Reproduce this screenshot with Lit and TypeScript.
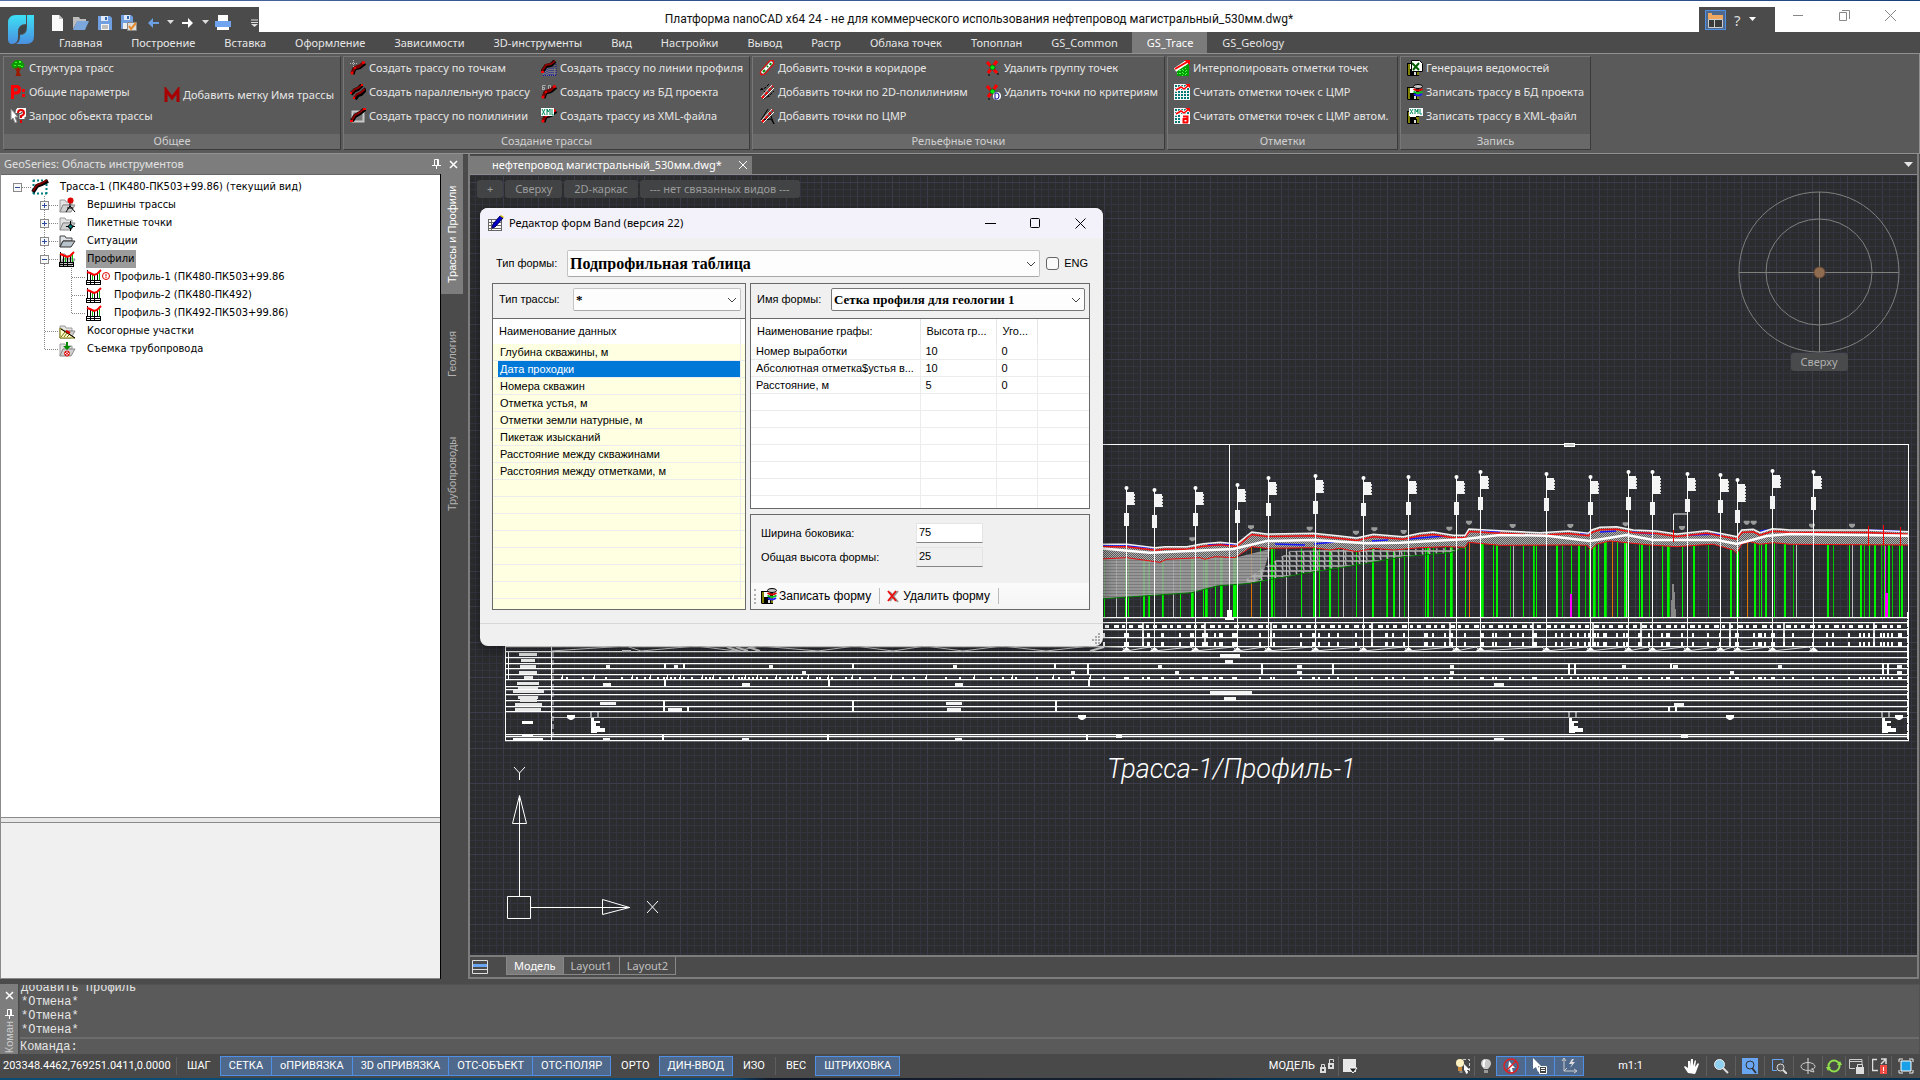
import { LitElement, html, svg, css, nothing } from "lit";
import { customElement, state, property } from "lit/decorators.js";
import { classMap } from "lit/directives/class-map.js";

/* ---------- icons ---------- */

const trace = svg`<path d="M2.500 14 L4.500 8.500 L10 7 L15 3" fill="none" stroke="#000" stroke-width="4" stroke-linejoin="round"/><path d="M2 13 L4.500 8 L9.500 6 L14 2" fill="none" stroke="#7d0000" stroke-width="3" stroke-linejoin="round"/><circle cx="2" cy="13" r="1.500" fill="#f00"/><circle cx="5" cy="8" r="1" fill="#f00"/><circle cx="13.500" cy="2.500" r="1.500" fill="#f00"/>`;
const floppy = svg`<path d="M0 3h12v13H1L0 15z" fill="#000"/><path d="M1 4h2v11H1z M9 9h3v6H9z" fill="#808000"/><path d="M3 4h6v5H3z" fill="#fff"/><path d="M4 11h6v4H4z" fill="#000"/><path d="M7 12h2v3H7z" fill="#ddd"/>`;
const xmlMark = svg`<path d="M2 0h14v8H2z" fill="#fff"/><path d="M3 1l3 5M6 1L3 6M8 6V1l2 3 1-3v5M13 1v5h2" fill="none" stroke="#008a5c" stroke-width="1"/>`;
const dbMark = svg`<ellipse cx="11" cy="2.500" rx="4.500" ry="2" fill="#c8c8c8" stroke="#000"/><path d="M6.500 5q4.500 3 9 0" stroke="#e00000" stroke-width="2" fill="none"/><path d="M6.500 7.500q4.500 3 9 0" stroke="#00c020" stroke-width="2" fill="none"/><path d="M7 10q4 3 8 0" stroke="#2020ff" stroke-width="2" fill="none"/>`;
const folder = svg`<path d="M1 3h5l1 2h6v3H4l-3 7z" fill="#e4e4e4" stroke="#9a9a9a"/><path d="M4 8h12l-4 7H1z" fill="#cfcfcf" stroke="#8c8c8c"/>`;
const redCross = svg`<path d="M2 2l10 11M12 1L3 13" stroke="#f00" stroke-width="3" fill="none"/><path d="M3 15h2m7-1h2" stroke="#000"/><circle cx="7.500" cy="7.500" r="2.500" fill="#00e800" stroke="#063"/>`;
const demGrid = svg`<path d="M0 0h16v16H0z" fill="#f6f6f6"/><path d="M1 2h14M1 5h14M1 8h14M1 11h14M1 14h14" stroke="#007878" stroke-width="2" stroke-dasharray="2 1"/><path d="M1 7L7 3l3 2 5-4" stroke="#fff" stroke-width="3" fill="none"/><path d="M2 6L7 3l3 2 5-4" stroke="#f00" stroke-width="1.500" fill="none"/><path d="M11 0h5v4z" fill="#f00"/>`;
const profileChart = svg`<path d="M1.500 1v10M4.500 4v7M8.500 5v7M11.500 4v7" stroke="#000"/><path d="M6.500 5v7M13.500 2v9" stroke="#00c000"/><path d="M1 3l3 1 4 2 3-1 4-4" stroke="#f00" stroke-width="2" fill="none"/><path d="M0 11.500h15M0 13.500h15M0 15.500h15M.5 11v5M4.500 11v5M8.500 11v5M14.500 11v5" stroke="#000"/>`;
const slantPoints = (fill: string) => svg`<path d="M2 13L13 1M4 15L15 4" stroke="#fff" stroke-width="1"/><path d="M3 14L14 2" stroke="${fill}" stroke-width="2" stroke-dasharray="3 2"/>`;

const ICONS: Record<string, unknown> = {
  tree: svg`<path d="M8 0c3 0 5 1 5 3 2 1 2 4 0 5-1 1-3 1-5 1S4 9 3 8C1 7 1 4 3 3c0-2 2-3 5-3z" fill="#0c9a00"/><path d="M5 2h2v1H5zM9 1h2v2H9zM4 5h2v1H4zM8 5h3v1H8zM11 6h2v1h-2z" fill="#3dff20"/><path d="M7 8h2v5l2 3H6l1-3zM5 8l2 3M11 8l-2 3" fill="#9c1a00" stroke="#9c1a00"/>`,
  params: svg`<path d="M2.500 15V2.500h4q3 0 3 3t-3 3.500h-4" fill="none" stroke="#f00" stroke-width="3"/><path d="M12 5h3v3h-3zM12 10h3v3h-3z" fill="#f00"/>`,
  query: svg`<path d="M1 1l7 8H5l2 5-2 1-2-5-2 2z" fill="#fff" stroke="#888"/><path d="M8 5q0-4 4-4t3 4q0 2-3 3v3" fill="none" stroke="#fff" stroke-width="5"/><path d="M8 5q0-3 3-3t3 3q0 2-3 3v2M11 12v3" fill="none" stroke="#e00000" stroke-width="2"/>`,
  mark: svg`<path d="M2 15V3l6 8 6-8v12" fill="none" stroke="#a80000" stroke-width="3"/>`,
  byPoints: svg`${trace}<path d="M3.500 0v7M0 3.500h7" stroke="#b8b8b8" stroke-dasharray="1 1"/>`,
  parallel: svg`<path d="M1 10L5 6l3-1 4-4M5 15l3-4 3-1 5-5" fill="none" stroke="#000" stroke-width="4"/><path d="M1 9L5 5l3-1 4-3M4 14l3-4 3-1 5-4" fill="none" stroke="#8a0000" stroke-width="2"/><path d="M0 8h2v2H0zM3 13h2v2H3zM11 0h2v2h-2z" fill="#f00"/>`,
  polyline: svg`<path d="M2.500 3.500h11v10h-11z" fill="#777" stroke="#c8c8c8" stroke-width="2"/><path d="M2 13L5 8l5-3 5-4" fill="none" stroke="#000" stroke-width="4"/><path d="M2 12L5 7l4-2 5-4" fill="none" stroke="#8a0000" stroke-width="2"/><path d="M0 12h3v2H0zM13 0h3v2h-3z" fill="#f00"/>`,
  profLine: svg`<path d="M2 8h13v8H2z" fill="#777"/><path d="M2 15.500h14M4 10v5M6 9v6M8 8v7M10 8v7M12 6v9M15 4v11" stroke="#1010a0" stroke-dasharray="1 1" stroke-width="1"/><path d="M1 12L5 6l5-1 4-4" fill="none" stroke="#000" stroke-width="4"/><path d="M1 11L5 5l5-1 4-3" fill="none" stroke="#8a0000" stroke-width="2"/><path d="M0 11h3v2H0z" fill="#f00"/>`,
  fromDb: svg`<path d="M1.500 6V1.500h3M1.500 3.500h2v2h-2M6 6.500h4M7.500 6V1.500h2V6" stroke="#aaa" fill="none"/>${trace}`,
  fromXml: svg`${trace}<path d="M0 0h13v8H0z" fill="#fff"/><path d="M1 1l3 6M4 1L1 7M6 7V1l1 3 2-3v6M11 1v6h2" stroke="#008a5c" fill="none"/>`,
  corridor: svg`<path d="M1 12L10 1l4-1 1 4-9 10-4 1z" fill="#6a4a4a" stroke="#f00"/><path d="M3 13L13 2" stroke="#fff" stroke-width="3"/><path d="M4 12l2-2M8 7l1-1M11 5l1-2" stroke="#008a00" stroke-width="2"/>`,
  poly2d: svg`<path d="M1 6l5-2 4-4M4 15l6-3 5-5M2 4l9 9" stroke="#000" fill="none" stroke-dasharray="3 1"/>${slantPoints("#f00")}`,
  dem: svg`<path d="M9 1L2 12l10-1 3 5L10 3" stroke="#000" fill="none"/>${slantPoints("#f00")}`,
  delGroup: redCross,
  delCrit: svg`${redCross}<circle cx="12" cy="12" r="4" fill="#fff"/><path d="M10 9v6h2q2 0 2-3t-2-3z" fill="none" stroke="#000090"/>`,
  interp: svg`<path d="M3 8l12-4v12H3z" fill="#00a000"/><path d="M5.500 7v9M8.500 6v10M11.500 5v11M3 10.500h12M3 13.500h12" stroke="#55ff55" stroke-dasharray="1 2"/><path d="M1 10L13 2" stroke="#fff" stroke-width="4"/><path d="M1 9L13 2" stroke="#f00" stroke-width="2"/><path d="M10 0h6v5z" fill="#f00"/>`,
  demRead: demGrid,
  demAuto: svg`${demGrid}<path d="M7 7h9v9H7z" fill="#fff"/><path d="M9 8.500h4.500v6M13 11H9.500v3.500H14" fill="none" stroke="#f00" stroke-width="2"/>`,
  report: svg`${floppy}<path d="M4.500 .5h8l3 3v8h-11z" fill="#fff" stroke="#000"/><path d="M5 3l7 7M12 3l-6 7" stroke="#006000" stroke-width="2"/>`,
  toDb: svg`${floppy}${dbMark}`,
  toXml: svg`${floppy}${xmlMark}`,
  fileNew: svg`<path d="M3 0h7l4 4v12H3z" fill="#fafafa"/><path d="M10 0v4h4z" fill="#c4c4c4"/>`,
  fileOpen: svg`<path d="M0 14V2h6l1 2h6v3H4z" fill="#bdbdbd"/><path d="M4 6h12l-4 9H0z" fill="#7ba7dc"/>`,
  save: svg`<path d="M1 1h12l2 2v12H1z" fill="#6f9fe0"/><path d="M4 1h7v5H4z" fill="#dfe9f7"/><path d="M8 2h2v3H8z" fill="#3567ad"/><path d="M4 9h8v6H4z" fill="#f4f4f4"/><path d="M5 11h6M5 13h6" stroke="#888"/>`,
  saveAs: svg`<path d="M0 0h10l2 2v12H0z" fill="#6f9fe0"/><path d="M3 0h6v5H3z" fill="#dfe9f7"/><path d="M6 1h2v3H6z" fill="#3567ad"/><path d="M2 8h8v6H2z" fill="#eee"/><path d="M6.500 7.500h9v8h-9z" fill="#ddd" stroke="#888"/><path d="M8 11l2 3 5-6" stroke="#e88b2c" stroke-width="2" fill="none"/>`,
  undo: svg`<path d="M8 3v4h6v2H8v4L3 8z" fill="#6c9fe4"/>`,
  redo: svg`<path d="M8 3v4H2v2h6v4l5-5z" fill="#fff"/>`,
  print: svg`<path d="M3 0h10v7H3z" fill="#fff"/><path d="M0 6h16v6H0z" fill="#6fa4ee"/><path d="M2 12h12v3H2z" fill="#fff"/>`,
  route: svg`<path d="M0 0h16v16H0z" fill="#fff"/><path d="M1 1.500h15M1 14.500h15M1.500 1v14M14.500 1v14" stroke="#008080" stroke-width="2" stroke-dasharray="2 2"/><path d="M1 13L5 7l5-2 6-3" stroke="#000" stroke-width="4" fill="none"/><path d="M1 12L5 6l5-2 5-3" stroke="#800000" stroke-width="2" fill="none"/>`,
  fVertex: svg`${folder}<path d="M11 3v7M11 9l-4 6M11 9l5 6M8 11h6" stroke="#000" fill="none"/><circle cx="11.500" cy="3.500" r="3" fill="#e00000"/>`,
  fPicket: svg`${folder}<path d="M11.500 6v10M7 11.500h9" stroke="#000"/><circle cx="11.500" cy="11.500" r="2" fill="#008080" stroke="#000"/>`,
  fOpen: svg`<path d="M1 3h5l1 2h6v3H4l-3 6z" fill="#dfe3e8" stroke="#444"/><path d="M4 8h12l-4 6H1z" fill="#b9c3cc" stroke="#333"/>`,
  fProfile: svg`${folder}${profileChart}`,
  profile: profileChart,
  profileWarn: svg`${profileChart}<circle cx="20" cy="7" r="3.500" fill="#fff" stroke="#e00000"/><path d="M20 5v2.500M20 8v1" stroke="#e00000"/>`,
  fSlope: svg`${folder}<path d="M1 5l15 10H1z" fill="#fffbd0" stroke="#7a7400"/><path d="M2 14l4-5M5 14l3-4M8 14l3-3" stroke="#7a7400"/><path d="M2 6l14 9" stroke="#000"/><path d="M7 8l4 2" stroke="#e00000" stroke-width="2"/>`,
  fPipe: svg`${folder}<path d="M7 1h2v4h3L8 9 4 5h3z" fill="#008a00"/><circle cx="8" cy="12.500" r="2.500" fill="#fff" stroke="#e00000"/><path d="M6 11l4 3M10 11l-4 3" stroke="#e00000"/>`,
  form: svg`<path d="M0 4h14v12H0z" fill="#fff"/><path d="M0 4.500h14M0 7.500h14M0 10.500h14M0 13.500h14M.5 4v12M3.500 4v12M13.500 4v12M0 15.500h14" stroke="#666"/><path d="M4 13l1-4 7-8 3 2-8 9z" fill="#0000c8" stroke="#000060"/><path d="M12 1l1-1 3 2-1 1z" fill="#e0c000"/>`,
  delForm: svg`<path d="M5 4l8 10M13 3L5 13" stroke="#999" stroke-width="2"/><path d="M3 3l8 10M11 3L3 13" stroke="#e81010" stroke-width="2"/>`,
  locks: svg`<path d="M1 9h6v6H1zM9 5h6v6H9z" fill="#ddd"/><path d="M2.500 9V6.500h3V9M10.500 5V1.500h4V4" stroke="#ddd" fill="none"/><path d="M3 11h2v2H3zM11 7h2v2h-2z" fill="#444"/>`,
  sheet: svg`<path d="M1 1h13v13H1z" fill="#e8e8e8"/><path d="M7 10h8l-4 5z" fill="#222" stroke="#fff"/>`,
  bulbSel: svg`<path d="M8 1.500h6.500v12H10M4.500 14h3" stroke="#ccc" stroke-dasharray="3 2" fill="none"/><circle cx="5" cy="5" r="4" fill="#fff2c0"/><path d="M3 9h4v4H3z" fill="#c98a3c"/><path d="M9 6l6 6h-3l1 3-2 1-1-4-1 1z" fill="#fff"/>`,
  bulb: svg`<path d="M8 1q5 0 5 5 0 2-3 5H6Q3 8 3 6q0-5 5-5z" fill="#c9c9c9"/><path d="M7 2q-2 2-1 7" stroke="#fff" stroke-width="2" fill="none"/><path d="M6 12h4v3H6z" fill="#999"/>`,
  noSel: svg`<path d="M6 3l6 7H9l1 4-2 1-1-4-2 1z" fill="#fff"/><circle cx="8" cy="8" r="7" fill="none" stroke="#e02020" stroke-width="1.500"/><path d="M3 13L13 3" stroke="#e02020" stroke-width="1.500"/>`,
  selMenu: svg`<path d="M1 0l8 8H6l2 5-2 1-2-5-3 2z" fill="#fff"/><path d="M7.500 8.500h7v7h-7z" fill="#444" stroke="#fff"/><path d="M9 10.500h4M9 12.500h4" stroke="#fff"/>`,
  dynUcs: svg`<path d="M3 1v12h12M1 3l2-3 2 3M13 11l3 2-3 2M3 13l3-3" stroke="#ccc" fill="none"/><path d="M11 1L8 6h3l-2 4 5-6h-3l2-3z" fill="#ddd"/>`,
  hand: svg`<path d="M4 15L0 9l1-1 3 2V3h2v5l1-7h2v7l2-6 1 1-1 6 3-4 1 1-3 8-1 2z" fill="#fff"/>`,
  zoom: svg`<path d="M10 10l5 5" stroke="#ddd" stroke-width="2"/><circle cx="6.500" cy="6.500" r="5" fill="#8fd0ee" stroke="#eee"/>`,
  zoomAll: svg`<path d="M0 0h16v16H0z" fill="#6aa5f2"/><path d="M10 10l4 5" stroke="#333" stroke-width="2"/><circle cx="8" cy="7" r="4" fill="none" stroke="#333"/>`,
  zoomWin: svg`<path d="M12 5V1.500H1.500v11H6" stroke="#6aa5f2" fill="none"/><path d="M12 12l4 4" stroke="#ddd" stroke-width="2"/><circle cx="9.500" cy="9.500" r="3.500" fill="#555" stroke="#ddd"/>`,
  orbit: svg`<path d="M8 0v16" stroke="#ddd"/><ellipse cx="8" cy="8.500" rx="7" ry="4" fill="none" stroke="#ccc"/><path d="M10 13l4 1-2-4" stroke="#ccc" fill="none"/>`,
  refresh: svg`<circle cx="8" cy="8" r="5.500" fill="none" stroke="#8fe04a" stroke-width="2"/><path d="M5 9H0l2 4zM11 7h5l-2-4z" fill="#8fe04a"/>`,
  winLock: svg`<path d="M13 6V1.500H.5v9H6M1 3.500h12" stroke="#ccc" fill="none"/><path d="M7 9h8v7H7z" fill="#ddd"/><path d="M8.500 9V6.500h5V9" stroke="#ddd" fill="none"/>`,
  winAlert: svg`<path d="M5 1.500H.5v11H6M9 1h5v5M9 6l5-5" stroke="#ddd" fill="none" stroke-width="1.500"/><path d="M8 7h7v9H8z" fill="#f04a44"/><path d="M11.500 9v4M11.500 14v1" stroke="#fff"/>`,
  full: svg`<path d="M1 4V1h4M11 1h4v3M15 12v3h-4M5 15H1v-3" stroke="#eee" fill="none"/><path d="M3 3h10v10H3z" fill="#1aa0e8" stroke="#fff"/>`,
};

const icon = (name: string, w = 16) =>
  html`<svg class="ico" width=${w} height="16" viewBox="0 0 ${w} 16" aria-hidden="true">${ICONS[name]}</svg>`;

/* ---------- drawing ---------- */

type Pt = [number, number];

@customElement("cad-drawing")
class CadDrawing extends LitElement {
  static styles = css`
    :host { display: block; width: 100%; height: 100%; }
    svg { display: block; width: 100%; height: 100%; }
    .minor { stroke: #333440; }
    .major { stroke: #3c3c4c; }
    .caption { font: italic 300 27px Roboto, "Noto Sans", sans-serif; fill: #fff; }
  `;

  /* left part is stored as thirds of a unit from (1100,430), right part from (1500,430) */
  private pts(a: Pt[], b: Pt[]): Pt[] {
    return [
      ...a.map(([x, y]): Pt => [1100 + x / 3, 430 + y / 3]),
      ...b.map(([x, y]): Pt => [1500 + x / 3, 430 + y / 3]),
    ];
  }

  private xs(a: number[], b: number[]) {
    return [...a.map((x) => 1100 + x / 3), ...b.map((x) => 1500 + x / 3)].map((x) => Math.round(x));
  }

  private at(line: Pt[], x: number) {
    for (let i = 1; i < line.length; i++) {
      const [x0, y0] = line[i - 1];
      const [x1, y1] = line[i];
      if (x <= x1) return y0 + ((y1 - y0) * (x - x0)) / (x1 - x0 || 1);
    }
    return line[line.length - 1][1];
  }

  render() {
    const ground = this.pts(
      [[0, 343], [80, 343], [165, 353], [195, 350], [260, 350], [310, 341], [360, 337], [410, 342], [455, 306], [500, 312], [640, 310], [720, 318], [770, 324], [820, 313], [910, 320], [960, 310], [1000, 306], [1060, 316], [1095, 316], [1107, 297]],
      [[0, 302], [120, 308], [205, 303], [265, 310], [275, 300], [300, 292], [350, 290], [400, 300], [470, 303], [530, 312], [620, 302], [690, 316], [711, 320], [725, 300], [760, 298], [780, 308], [817, 296], [870, 300], [1100, 300], [1227, 305]]);
    const lower = this.pts(
      [[0, 387], [80, 383], [180, 397], [200, 388], [300, 383], [315, 388], [345, 380], [405, 383], [455, 350], [500, 355], [640, 353], [690, 360], [720, 355], [770, 365], [820, 355], [880, 360], [960, 353], [1040, 350], [1095, 352], [1105, 337]],
      [[0, 346], [200, 345], [262, 346], [272, 360], [290, 342], [330, 333], [450, 345], [530, 350], [600, 345], [640, 343], [700, 360], [711, 370], [725, 342], [750, 335], [780, 343], [820, 338], [870, 343], [1227, 345]]);
    const mid = this.pts(
      [[0, 355], [150, 368], [400, 357], [500, 333], [640, 330], [800, 340], [900, 338], [1090, 328]],
      [[0, 315], [140, 317], [270, 333], [380, 315], [460, 330], [650, 330], [711, 342], [800, 318], [870, 312], [1227, 317]]);
    const bottom = this.pts([[0, 507], [275, 488], [350, 468], [450, 460], [625, 428], [770, 405], [910, 380], [1050, 368], [1095, 352]], []);
    const green = this.xs(
      [12, 74, 79, 85, 129, 143, 148, 185, 190, 240, 273, 280, 309, 316, 322, 344, 360, 365, 398, 402, 407, 480, 513, 522, 604, 638, 643, 657, 687, 715, 767, 816, 857, 861, 879, 912, 975, 980, 1000, 1035, 1050, 1056, 1095, 1144, 1148, 1180, 1187],
      [30, 69, 99, 103, 107, 168, 187, 213, 235, 254, 268, 280, 285, 293, 312, 317, 352, 372, 380, 416, 424, 447, 487, 500, 506, 547, 579, 623, 661, 690, 708, 714, 763, 777, 783, 795, 817, 822, 853, 878, 939, 980, 1000, 1048, 1080, 1092, 1108, 1121, 1143, 1152, 1165, 1176, 1196, 1202]);
    const gray = this.xs([49, 219, 558, 729, 898], [38, 377, 887, 1056]);
    const orange = this.xs([452, 1107], [335, 741]);
    const poles: [number, number, number][] = [
      [1126, 488, 13], [1154, 490, 13], [1195, 488, 13], [1237, 485, 13], [1268, 478, 13], [1315, 476, 13], [1363, 478, 13], [1408, 477, 13], [1456, 477, 13], [1480, 472, 13],
      [1546, 474, 12], [1590, 477, 13], [1628, 472, 13], [1652, 472, 18], [1687, 474, 13], [1720, 475, 13], [1737, 480, 18], [1772, 471, 13], [1813, 472, 13]];
    const hats = this.pts(
      [[277, 328], [453, 292], [629, 296], [768, 308], [823, 298], [911, 306], [1048, 296], [1107, 278]],
      [[38, 288], [211, 288], [377, 283], [546, 294], [740, 278], [761, 278], [936, 287], [1056, 287]]);
    const str = (l: Pt[], dy = 0) => l.map(([x, y]) => `${x.toFixed(1)},${(y + dy).toFixed(1)}`).join(" ");
    const rev = (l: Pt[]) => [...l].reverse();

    const grid: unknown[] = [];
    for (let i = 0; i < 420; i++) {
      const x = Math.round(467.600 + (i * 35.370) / 5) + 0.5;
      grid.push(svg`<line class=${i % 5 === 0 ? "major" : "minor"} x1=${x} x2=${x} y1="0" y2="1600"/>`);
    }
    for (let i = 0; i < 200; i++) {
      const y = Math.round(175.300 + (i * 35.330) / 5) + 0.5;
      grid.push(svg`<line class=${i % 5 === 1 ? "major" : "minor"} y1=${y} y2=${y} x1="400" x2="3400"/>`);
    }

    const rowYs = [617, 622, 629, 637, 646, 651, 657, 663, 668, 674, 679, 686, 689, 694, 700, 706, 711, 734, 736, 740];
    const ticksHidden = [562, 567, 583, 594, 606, 622, 632, 637, 645, 650, 658, 664, 667, 671, 675, 680, 684, 692, 702, 706, 710, 713, 720, 729, 733, 739, 742, 745, 749, 753, 757, 761, 767, 776, 780, 788, 792, 797, 802, 808, 817, 820, 828, 832, 846, 852, 860, 875, 891, 903, 914, 926, 946, 960, 974, 991, 1003, 1012, 1016, 1037, 1053, 1059, 1073, 1090];
    const zigL: Pt[] = [551, 626, 641, 696, 736, 760, 818, 855, 893, 925, 963, 1002, 1046, 1090].map((x, i): Pt => [x, i % 2 ? 646 : 651]);
    const zig = [...zigL, ...poles.flatMap(([x]): Pt[] => [[x - 4, 647], [x, 651]])];
    const bars = [[664, 663, 6], [683, 663, 6], [852, 663, 6], [1054, 663, 6], [1087, 663, 12], [1261, 663, 12], [1332, 663, 12], [1568, 663, 12], [1574, 663, 12], [1670, 663, 6], [1882, 663, 12], [1887, 663, 12],
      [663, 700, 11], [687, 706, 5], [852, 700, 11], [1055, 700, 11], [1668, 706, 6], [1675, 706, 6], [664, 680, 6], [828, 680, 6], [1088, 680, 6], [662, 735, 6], [827, 735, 6], [1086, 735, 6]];
    const cells = [[606, 665, 4], [674, 665, 4], [769, 665, 4], [953, 665, 4], [802, 671, 4], [1071, 671, 4], [1158, 665, 4], [1175, 671, 4], [1297, 665, 5], [1297, 671, 5], [1450, 665, 4], [1450, 671, 4], [1622, 665, 4], [1673, 665, 5], [1730, 671, 4], [1778, 665, 4], [1897, 665, 5], [1897, 671, 5],
      [603, 683, 8], [742, 683, 8], [955, 683, 8], [600, 702, 16], [668, 708, 14], [946, 702, 16], [947, 708, 14], [1220, 654, 20], [1225, 660, 8], [1210, 691, 42], [1224, 697, 12], [1494, 683, 10], [1674, 703, 10],
      [603, 738, 7], [742, 738, 7], [955, 738, 7], [1116, 735, 6], [1494, 738, 10], [1681, 735, 7]];
    const titles: [number, number][] = [[653, 18], [659, 14], [665, 16], [671, 18], [676, 9], [682, 22], [686, 20], [690, 31], [696, 20], [699, 17], [703, 27], [708, 26]];

    return html`<svg role="img" aria-label="Профиль трассы">
      <defs>
        <pattern id="chk" width="2" height="2" patternUnits="userSpaceOnUse"><rect width="2" height="2" fill="#5c5c5c"/><rect width="1" height="1" fill="#b0b0b0"/><rect x="1" y="1" width="1" height="1" fill="#b0b0b0"/></pattern>
        <pattern id="lin" width="40" height="3" patternUnits="userSpaceOnUse"><rect width="40" height="3" fill="#888"/><rect width="40" height="2" fill="#a8a8a8"/></pattern>
        <pattern id="brk" width="7" height="5" patternUnits="userSpaceOnUse"><path d="M0 1h7M1 1l1 4" stroke="#b4b4b4" stroke-width="1.500" fill="none"/></pattern>
      </defs>
      <rect width="100%" height="100%" fill="#2b2c2e"/>
      <g transform="translate(-470 -175)">
        <g shape-rendering="crispEdges">${grid}</g>

        <g class="boreholes" shape-rendering="crispEdges">
          ${green.map((x, i) => svg`<rect x=${x} y=${this.at(mid, x)} width=${i % 3 === 1 ? 2 : 1} height=${617 - this.at(mid, x)} fill=${i % 3 === 2 ? "#00c400" : "#00f400"}/>`)}
          ${gray.map((x) => svg`<rect x=${x} y=${this.at(ground, x)} width="1" height=${617 - this.at(ground, x)} fill="#c0c0c0"/>`)}
          ${orange.map((x) => svg`<rect x=${x} y=${this.at(mid, x)} width="1" height=${617 - this.at(mid, x)} fill="#e07400"/>`)}
          <rect x="1570" y="594" width="2" height="23" fill="#f0f"/><rect x="1885" y="593" width="3" height="24" fill="#f0f"/><rect x="1885" y="546" width="1" height="48" fill="#f0f"/>
          <path d="M1671 617l1-33h2l2 33z" fill="#888"/>
        </g>
        <g opacity="0.850">
          <polygon points="${str(lower.filter((p) => p[0] < 1250))} 1270,549 1262,578 ${str(rev(bottom.filter((p) => p[0] < 1255)))}" fill="url(#lin)"/>
        </g>
        <polygon points="1245,580 1290,551 1360,549 1466,548 ${str(rev(bottom.filter((p) => p[0] > 1240)))}" fill="url(#brk)"/>
        <polygon points="${str(ground)} ${str(rev(lower))}" fill="url(#chk)"/>
        <polyline points=${str(bottom)} fill="none" stroke="#007800"/>
        <polyline points=${str(lower)} fill="none" stroke="#f01010"/>
        <path d="M1103 546h27l24 2M1208 545l30-1M1275 544l30 1M1314 544l20-2M1372 541l16-1M1408 539l36-3M1480 530l20 2M1580 534l10-1M1600 532l16-1M1632 532l22 2M1690 535l32-1M1760 531l8-1M1868 530l31 1" stroke="#1818ff" stroke-width="1.500" fill="none"/>
        <polyline points=${str(ground, 2.500)} fill="none" stroke="#f01010" stroke-width="1.500"/>
        <polyline points=${str(ground)} fill="none" stroke="#f2f2f2" stroke-width="1.500"/>
        <polyline points=${str(mid)} fill="none" stroke="#fff" stroke-width="2.500"/>
        <path d="M1868.500 526v20M1883.500 525v20M1900.500 527v19M1673.500 530v12" stroke="#f00"/>
        <path d="M1673.500 530v-16h14" stroke="#eee" fill="none"/>
        ${hats.map(([x, y]) => svg`<path d="M${x - 3} ${y - 2}h6v2l-2 2h-2l-2-2z" fill="#9a9a9a"/>`)}

        <g class="poles">
          ${poles.map(([x, y, h]) => svg`<rect x=${x} y=${y} width="1" height=${648 - y} fill="#fff"/><circle cx=${x + 0.5} cy=${y} r="2" fill="#fff"/><rect x=${x + 1} y=${y + 4} width="7" height=${h} fill="#f4f4f4"/><path d="M${x + 8.5} ${y + 6}v${h - 2}" stroke="#ddd" stroke-dasharray="2 1"/><rect x=${x - 2} y=${y + h + 12} width="5" height="13" fill="#f4f4f4"/><path d="M${x - 4} 651h9l-3-3h-3z" fill="#fff"/>`)}
        </g>

        <g class="frame" shape-rendering="crispEdges" stroke="#fff" fill="none">
          <path d="M505.500 444.500H1908.500V740M505.500 444.500V740M551.500 617V740M508.500 652V680M1229.500 444V617"/>
          <rect x="1564" y="443" width="10" height="3" fill="#ccc"/>
        </g>
        <g class="rows">
          ${rowYs.map((y) => svg`<rect x="505" y=${y} width="1404" height="1" fill="#fff"/><rect x="505" y=${y + 1} width="1404" height="1" fill="#fff" opacity="0.250"/>`)}
          <rect x="551" y="717" width="1357" height="1" fill="#bbb"/>
        </g>
        <path d="M1227 610h5v7h-5zM1225 618h9v2h-9z" fill="#fff"/>
        <path d="M1908 612v128" stroke="#fff" stroke-width="2" stroke-dasharray="7 1"/>
        <path d="M553 652v88" stroke="#fff" stroke-dasharray="5 3" opacity="0.800"/>
        <path d="M1105 626.500h800" stroke="#fff" stroke-width="3" stroke-dasharray="4 5 5 3 3 4"/>
        <g fill="#fff" shape-rendering="crispEdges">
          ${green.map((x, i) => svg`<rect x=${x - 1} y="633" width="2" height="4"/><rect x=${x - 1} y="642" width="2" height="4"/><rect x=${x - 1} y="677" width="2" height="3"/>${i % 9 === 4 ? svg`<rect x=${x - 1} y="622" width="2" height="24" opacity="0.800"/>` : nothing}`)}
          ${ticksHidden.map((x) => svg`<rect x=${x - 1} y="677" width="2" height="3"/>`)}
          ${ticksHidden.filter((_, i) => i % 3 === 0).map((x) => svg`<rect x=${x} y="675" width="1" height="3"/>`)}
          ${bars.map(([x, y, h]) => svg`<rect x=${x} y=${y} width="2" height=${h}/>`)}
          ${titles.map(([y, w]) => svg`<rect x=${528 - w / 2} y=${y} width=${w} height="3" fill="#e8e8e8"/>`)}
          <rect x="522" y="721" width="11" height="3"/><rect x="522" y="735" width="11" height="2"/><rect x="513" y="738" width="30" height="2"/>
        </g>
        ${cells.map(([x, y, w]) => svg`<rect x=${x} y=${y} width=${w} height="3" fill="#f4f4f4"/>`)}
        <polyline points=${str(zig)} fill="none" stroke="#d8d8d8"/>
        <path d="M727 647l12 4M736 647l12 4M748 647l12 4M622 651h9M1090 651l14-4" stroke="#ddd" stroke-width="2" fill="none"/>
        ${[571, 1082, 1730, 1899].map((x) => svg`<path d="M${x - 4} 715h8v3l-3 2h-2l-3-2z" fill="#fff"/>`)}
        ${[593, 1571, 1884].map((x) => svg`<path d="M${x - 2} 712v5M${x + 5} 712v5" stroke="#fff"/><path d="M${x - 2} 718h3v3h6v2h-4v3h4v2h5v4h-8v1h-6z" fill="#fff"/>`)}

        <text class="caption" x="1107" y="778">Трасса-1/Профиль-1</text>

        <g class="ucs" fill="none" stroke="#fff">
          <path d="M507.500 896.500h23v22h-23zM519.500 896V796M512.500 823.500h14l-7-28zM531 907.500h99M602.500 899.500v15l27-7z"/>
          <path d="M514 767l5.500 6 5.500-6M519.500 773v7M647 901l11 12M658 901l-11 12"/>
        </g>
      </g>
    </svg>`;
  }
}

/* ---------- form editor window ---------- */

const DATA_ROWS = ["Глубина скважины, м", "Дата проходки", "Номера скважин", "Отметка устья, м", "Отметки земли натурные, м", "Пикетаж изысканий", "Расстояние между скважинами", "Расстояния между отметками, м"];
const FORM_ROWS = [["Номер выработки", "10", "0"], ["Абсолютная отметка$устья в...", "10", "0"], ["Расстояние, м", "5", "0"]];
const blank = (n: number) => Array.from({ length: n });

@customElement("form-editor")
class FormEditor extends LitElement {
  @state() private selected = 1;

  static styles = css`
    :host { display: flex; flex-direction: column; background: #f0f0f0; border-radius: 8px; overflow: hidden; font: 11px/13px "Liberation Sans", Arial, sans-serif; color: #000; box-shadow: 0 4px 14px rgba(0, 0, 0, .4); }
    button { font: inherit; color: inherit; background: none; border: 0; padding: 0; display: inline-flex; align-items: center; justify-content: center; }
    .title { display: flex; align-items: center; height: 30px; background: #f3f1f9; padding-left: 8px; font: 11px/16px "Noto Sans", sans-serif; }
    .title span { flex: 1; padding-left: 5px; }
    .title button { width: 45px; height: 28px; }
    .body { display: grid; grid-template-columns: 254px 1fr; column-gap: 4px; padding: 12px 13px 13px 12px; }
    .type { grid-column: 1 / 3; display: flex; align-items: center; height: 27px; margin-bottom: 6px; }
    .type > label:first-child { width: 71px; padding-left: 4px; }
    .pick { position: relative; flex: 1; display: flex; }
    .pick svg { position: absolute; right: 4px; top: 50%; margin-top: -3px; pointer-events: none; }
    select { appearance: none; width: 100%; border: 1px solid #c4c4c4; border-bottom-color: #a8a8a8; border-radius: 2px; background: #fdfdfd; color: #000; height: 23px; padding: 0 2px; font: bold 13px/16px "Liberation Serif", serif; }
    .big select { height: 27px; font-size: 16px; }
    .strong select { border-color: #777; }
    .eng { display: flex; align-items: center; gap: 5px; padding: 0 2px 0 6px; }
    .eng input { margin: 0; width: 13px; height: 13px; appearance: none; background: #fafafa; border: 1px solid #666; border-radius: 3px; }
    .box { border: 1px solid #696969; display: flex; }
    .head { align-items: center; padding: 0 4px 3px 6px; margin-bottom: -1px; box-sizing: border-box; height: 36px; }
    .head label { width: 74px; }
    .left { display: flex; flex-direction: column; }
    .right { display: flex; flex-direction: column; }
    table { border-collapse: collapse; width: 100%; table-layout: fixed; }
    th { font-weight: normal; text-align: left; height: 24px; padding: 0 0 0 6px; background: #fff; border-right: 1px solid #e5e5e5; white-space: nowrap; }
    th:last-child, td:last-child { border-right: 0; }
    td { height: 16px; padding: 0 0 0 5px; border-bottom: 1px solid #ececec; border-right: 1px solid #ececec; white-space: nowrap; overflow: hidden; }
    .list { flex: 1; background: #ffffe1; padding-bottom: 10px; overflow: hidden; align-items: flex-start; }
    .list th { height: 25px; }
    .list td span { display: block; padding-left: 2px; line-height: 16px; }
    .list td.sel span { background: #0078d7; color: #fff; }
    .list .c1 { width: 247px; }
    .grid { height: 189px; background: #fff; overflow: hidden; margin-bottom: 5px; align-items: flex-start; }
    .g1 { width: 169px; } .g2 { width: 76px; } .g3 { width: 41px; }
    .sizes { flex: 1; flex-direction: column; }
    .field { display: flex; align-items: center; padding: 0 0 4px 10px; }
    .field:first-child { padding-top: 8px; }
    .field label { width: 155px; }
    .field input { box-sizing: border-box; width: 67px; height: 20px; border: 1px solid #e4e4e4; border-bottom-color: #868686; background: #fff; font: inherit; padding: 0 2px 3px; color: #000; }
    .field input[readonly] { background: #f0f0f0; }
    .tools { display: flex; align-items: center; margin-top: auto; height: 26px; background: linear-gradient(#fbfbfb, #f4f4f4); padding-left: 3px; font: 12px/16px "Liberation Sans", sans-serif; }
    .tools button { gap: 2px; padding: 0 8px 0 5px; border-right: 1px solid #bbb; height: 16px; }
    .grip { border-left: 2px dotted #b0b0b0; height: 15px; }
    .status { border-top: 1px solid #d7d7d7; height: 20px; display: flex; justify-content: flex-end; align-items: flex-end; padding: 0 1px 2px; }
  `;

  private pick(id: string, value: string, cls = "") {
    return html`<span class="pick ${cls}"><select id=${id}><option>${value}</option></select>
      <svg width="10" height="6" viewBox="0 0 10 6" aria-hidden="true"><path d="M1 1l4 4 4-4" fill="none" stroke="#444"/></svg></span>`;
  }

  render() {
    return html`
      <div class="title">${icon("form")}<span>Редактор форм Band (версия 22)</span>
        <button aria-label="Свернуть"><svg width="11" height="11"><path d="M0 5.500h11" stroke="#000"/></svg></button>
        <button aria-label="Развернуть"><svg width="11" height="11"><rect x=".5" y=".5" width="9" height="9" rx="1" fill="none" stroke="#000"/></svg></button>
        <button aria-label="Закрыть"><svg width="11" height="11"><path d="M.5.5l10 10M10.500.5l-10 10" stroke="#000"/></svg></button>
      </div>
      <div class="body">
        <div class="type"><label for="ftype">Тип формы:</label>${this.pick("ftype", "Подпрофильная таблица", "big")}
          <div class="eng"><input type="checkbox" id="eng" /><label for="eng">ENG</label></div></div>
        <div class="left">
          <div class="box head"><label for="rtype">Тип трассы:</label>${this.pick("rtype", "*")}</div>
          <div class="box list"><table>
            <colgroup><col class="c1" /><col /></colgroup>
            <thead><tr><th scope="col">Наименование данных</th><th></th></tr></thead>
            <tbody>${DATA_ROWS.map((r, i) => html`<tr @click=${() => (this.selected = i)}><td class=${classMap({ sel: i === this.selected })}><span>${r}</span></td><td></td></tr>`)}
            ${blank(7).map(() => html`<tr><td></td><td></td></tr>`)}</tbody>
          </table></div>
        </div>
        <div class="right">
          <div class="box head"><label for="fname">Имя формы:</label>${this.pick("fname", "Сетка профиля для геологии 1", "strong")}</div>
          <div class="box grid"><table>
            <colgroup><col class="g1" /><col class="g2" /><col class="g3" /><col /></colgroup>
            <thead><tr><th scope="col">Наименование графы:</th><th scope="col">Высота гр...</th><th scope="col">Уго...</th><th></th></tr></thead>
            <tbody>${FORM_ROWS.map((r) => html`<tr>${r.map((c) => html`<td>${c}</td>`)}<td></td></tr>`)}
            ${blank(7).map(() => html`<tr><td></td><td></td><td></td><td></td></tr>`)}</tbody>
          </table></div>
          <div class="box sizes">
            <div class="field"><label for="side">Ширина боковика:</label><input id="side" value="75" /></div>
            <div class="field"><label for="total">Общая высота формы:</label><input id="total" value="25" readonly /></div>
            <div class="tools"><span class="grip"></span><button>${icon("toDb")}Записать форму</button><button>${icon("delForm")}Удалить форму</button></div>
          </div>
        </div>
      </div>
      <div class="status"><svg width="12" height="12"><path d="M8 2h2M5 5h2M8 5h2M2 8h2M5 8h2M8 8h2M8 11h2M5 11h2" stroke="#aaa" stroke-width="2"/></svg></div>
    `;
  }
}

/* ---------- application shell ---------- */

const MENU = ["Главная", "Построение", "Вставка", "Оформление", "Зависимости", "3D-инструменты", "Вид", "Настройки", "Вывод", "Растр", "Облака точек", "Топоплан", "GS_Common", "GS_Trace", "GS_Geology"];

type Cmd = [string, string];
const GROUPS: { name: string; cls: string; cols: Cmd[][] }[] = [
  { name: "Общее", cls: "w1", cols: [[["tree", "Структура трасс"], ["params", "Общие параметры"], ["query", "Запрос объекта трассы"]], [["mark", "Добавить метку Имя трассы"]]] },
  { name: "Создание трассы", cls: "w2", cols: [[["byPoints", "Создать трассу по точкам"], ["parallel", "Создать параллельную трассу"], ["polyline", "Создать трассу по полилинии"]], [["profLine", "Создать трассу по линии профиля"], ["fromDb", "Создать трассу из БД проекта"], ["fromXml", "Создать трассу из XML-файла"]]] },
  { name: "Рельефные точки", cls: "w3", cols: [[["corridor", "Добавить точки в коридоре"], ["poly2d", "Добавить точки по 2D-полилиниям"], ["dem", "Добавить точки по ЦМР"]], [["delGroup", "Удалить группу точек"], ["delCrit", "Удалить точки по критериям"]]] },
  { name: "Отметки", cls: "w4", cols: [[["interp", "Интерполировать отметки точек"], ["demRead", "Считать отметки точек с ЦМР"], ["demAuto", "Считать отметки точек с ЦМР автом."]]] },
  { name: "Запись", cls: "w5", cols: [[["report", "Генерация ведомостей"], ["toDb", "Записать трассу в БД проекта"], ["toXml", "Записать трассу в XML-файл"]]] },
];

/* guides: "." none, "|" line, "+" / "m" expander on a line, "-" root expander, "t" branch, "l" last branch */
const TREE: { g: string; icon: string; text: string; open?: boolean }[] = [
  { g: "-", icon: "route", text: "Трасса-1 (ПК480-ПК503+99.86) (текущий вид)" },
  { g: ".+", icon: "fVertex", text: "Вершины трассы" },
  { g: ".+", icon: "fPicket", text: "Пикетные точки" },
  { g: ".+", icon: "fOpen", text: "Ситуации" },
  { g: ".m", icon: "fProfile", text: "Профили", open: true },
  { g: ".|t", icon: "profileWarn", text: "Профиль-1 (ПК480-ПК503+99.86" },
  { g: ".|t", icon: "profile", text: "Профиль-2 (ПК480-ПК492)" },
  { g: ".|l", icon: "profile", text: "Профиль-3 (ПК492-ПК503+99.86)" },
  { g: ".t", icon: "fSlope", text: "Косогорные участки" },
  { g: ".l", icon: "fPipe", text: "Съемка трубопровода" },
];

const guide = (c: string) => html`<svg class="guide" width="27" height="18" aria-hidden="true">
  ${"|+tm".includes(c) ? svg`<path d="M13.500 0v18" stroke="#888" stroke-dasharray="1 1"/>` : c === "l" ? svg`<path d="M13.500 0v10" stroke="#888" stroke-dasharray="1 1"/>` : nothing}
  ${"-+tml".includes(c) ? svg`<path d="M14 9.500h13" stroke="#888" stroke-dasharray="1 1"/>` : nothing}
  ${"-+m".includes(c) ? svg`<rect x="9.500" y="5.500" width="8" height="8" fill="#f8f8f8" stroke="#8a8a8a"/><path d="M11 9.500h5" stroke="#2b4a9b"/>` : nothing}
  ${c === "+" ? svg`<path d="M13.500 7v5" stroke="#2b4a9b"/>` : nothing}</svg>`;

const pin = html`<svg width="9" height="10" viewBox="0 0 9 10" aria-hidden="true"><path d="M2.500 6V.5h4V6M5.500 0v6M0 6.500h9M4.500 7v3" stroke="#fff" fill="none"/></svg>`;
const cross = html`<svg width="9" height="9" viewBox="0 0 9 9" aria-hidden="true"><path d="M1 1l7 7M8 1L1 8" stroke="#fff" stroke-width="1.500"/></svg>`;

@customElement("app-root")
class AppRoot extends LitElement {
  @property() menu = "GS_Trace";
  @state() private modes = new Set(["СЕТКА", "оПРИВЯЗКА", "3D оПРИВЯЗКА", "ОТС-ОБЪЕКТ", "ОТС-ПОЛЯР", "ДИН-ВВОД", "ШТРИХОВКА"]);

  static styles = css`
    :host { display: flex; flex-direction: column; height: 100vh; background: #4b4b4b; color: #e6e6e6; font: 11px/16px "Noto Sans", sans-serif; overflow: hidden; }
    button { font: inherit; color: inherit; background: none; border: 0; padding: 0; margin: 0; display: inline-flex; align-items: center; justify-content: center; white-space: nowrap; }
    .ico { flex: none; display: block; }
    .edge { height: 1px; background: linear-gradient(90deg, #5470a4, #2d4d8c, #5470a4, #16407c); flex: none; }
    .desk { height: 2px; flex: none; background: linear-gradient(90deg, #0b4c74 0, #0a4a78 38%, #111a2a 40%, #15202f 62%, #053253 66%, #05304f); }

    .titlebar { flex: none; height: 31px; background: #fff; display: flex; align-items: flex-end; color: #111; }
    .quick { display: flex; align-items: center; background: #4b4b4b; height: 25px; width: 259px; box-sizing: border-box; padding: 6px 1px 0 49px; gap: 8px; }
    .quick .more { margin-left: auto; }
    .quick .narrow { margin: 0 -2px; }
    .logo { position: absolute; left: 8px; top: 15px; }
    .titlebar h1 { flex: 1; margin: 0; text-align: center; font: 12px/16px Roboto, sans-serif; align-self: center; padding-top: 4px; }
    .help { display: flex; align-items: center; gap: 8px; background: #4b4b4b; height: 25px; width: 76px; box-sizing: border-box; padding-left: 6px; color: #ddd; font-size: 15px; }
    .wbtn { display: flex; width: 145px; align-self: flex-start; }
    .wbtn button { width: 46px; height: 28px; }

    .menu { flex: none; display: flex; height: 21px; padding-left: 44px; }
    .menu button { padding: 0 14px 0 15px; line-height: 20px; }
    .menu button.on { background: #7b7b7b; color: #fff; }

    .ribbon { flex: none; display: flex; gap: 2px; background: #5a5a5a; border: 1px solid #919191; border-left: 0; padding: 2px 3px 3px; height: 94px; box-shadow: 0 1px 0 #444; }
    .group { display: flex; flex-direction: column; box-sizing: border-box; border: 1px solid #777; border-right-color: #3a3a3a; border-bottom-color: #3a3a3a; }
    .group h2 { margin: 0; background: #696969; font: inherit; text-align: center; color: #d0d0d0; height: 15px; line-height: 14px; }
    .cols { flex: 1; display: flex; justify-content: space-between; padding: 0 6px; }
    .col { display: flex; flex-direction: column; align-items: flex-start; gap: 8px; padding-top: 3px; }
    .col.one { justify-content: center; padding: 0 0 1px; }
    .col button { gap: 3px; height: 16px; }
    .w1 { flex: 0 0 338px; } .w2 { flex: 0 0 407px; } .w3 { flex: 0 0 413px; } .w4 { flex: 0 0 231px; } .w5 { flex: 0 0 191px; }

    .main { flex: 1; min-height: 0; display: flex; gap: 5px; padding: 0 1px 5px 0; }
    aside { flex: none; width: 463px; display: flex; flex-direction: column; }
    .dockhead { flex: none; display: flex; align-items: center; height: 20px; background: #7d7d7d; color: #e2e2e2; padding: 0 5px 0 4px; gap: 8px; }
    .dockhead span { flex: 1; }
    .dock { flex: 1; min-height: 0; display: flex; }
    .dockbody { flex: 1; display: flex; flex-direction: column; border-right: 1px solid #000; border-left: 1px solid #8a8a8a; background: #e8e8e8; gap: 4px; }
    .tree { flex: 1; background: #fff; border-bottom: 1px solid #8a8a8a; border-top: 1px solid #666; margin: 0; padding: 3px 0 0 3px; list-style: none; color: #000; font: 11px/18px "DejaVu Sans Condensed", "DejaVu Sans", sans-serif; }
    .tree li { display: flex; height: 18px; }
    .tree .ticon { width: 27px; padding: 1px 0 0 1px; }
    .tree .ticon .ico { overflow: visible; }
    .tree button { padding: 0 2px 0 1px; }
    .tree button.sel { background: #9c9c9c; }
    .guide { flex: none; display: block; }
    .props { flex: none; height: 155px; background: #f0f0f0; border-top: 1px solid #8a8a8a; border-bottom: 1px solid #8a8a8a; }
    .sidetabs { width: 22px; display: flex; flex-direction: column; flex: none; }
    .sidetabs button { min-height: 120px; writing-mode: vertical-rl; transform: rotate(180deg); color: #b4b4b4; font: 11px/16px "Liberation Sans", sans-serif; }
    .sidetabs button.on { background: #7d7d7d; color: #fff; }

    .docs { flex: 1; min-width: 0; display: flex; flex-direction: column; border-left: 2px solid #7d7d7d; border-right: 2px solid #7d7d7d; border-bottom: 2px solid #7d7d7d; }
    .doctabs { flex: none; display: flex; align-items: center; height: 20px; border-bottom: 1px solid #8a8a8a; padding-right: 4px; justify-content: space-between; }
    .doctabs .tab { display: flex; align-items: center; height: 18px; gap: 17px; padding: 0 5px 0 22px; background: #7b7b7b; color: #fff; align-self: flex-end; }
    .view { flex: 1; min-height: 0; position: relative; overflow: hidden; }
    .vbtns { position: absolute; left: 7px; top: 5px; display: flex; gap: 2px; }
    .vbtns button, .compass button { height: 18px; background: #414345; border-radius: 3px; color: #9b9b9b; padding: 0 10px; }
    .compass { position: absolute; right: 17px; top: 16px; display: flex; flex-direction: column; align-items: center; }
    .compass button { color: #b0b0b0; background: #484a4b; }
    form-editor { position: absolute; left: 10px; top: 33px; width: 623px; }
    .layouts { flex: none; display: flex; border-top: 2px solid #7d7d7d; height: 20px; padding-left: 2px; }
    .layouts .list { width: 34px; justify-content: flex-start; }
    .layouts button.t { height: 18px; border: 1px solid #888; border-top: 0; padding: 0 7px; color: #c0c0c0; margin-right: -1px; }
    .layouts button.on { background: #7b7b7b; color: #fff; }

    .command { flex: none; display: flex; height: 70px; }
    .chead { width: 18px; background: #7d7d7d; display: flex; flex-direction: column; align-items: center; gap: 9px; padding-top: 7px; box-sizing: border-box; }
    .chead span { writing-mode: vertical-rl; transform: rotate(180deg); color: #ccc; font: 11px/16px "Liberation Sans", sans-serif; margin-top: -7px; }
    .cbody { flex: 1; display: flex; flex-direction: column; background: #5a5a5a; font: 12px/14px "Liberation Mono", monospace; margin-left: 1px; border: 1px solid #525252; border-bottom: 0; }
    .log { height: 52px; overflow: hidden; display: flex; flex-direction: column; justify-content: flex-end; padding-left: 1px; border-bottom: 2px solid #6c6c6c; }
    .log div { flex: none; }
    .prompt { flex: 1; display: flex; align-items: center; }
    .prompt input { flex: 1; border: 0; background: none; font: inherit; color: inherit; outline: 0; padding: 0; min-width: 0; }

    .status { flex: none; display: flex; align-items: center; height: 24px; font: 11px/16px Roboto, sans-serif; color: #fff; background: #494949; }
    .coords { width: 176px; padding-left: 3px; box-sizing: border-box; white-space: nowrap; }
    .sep { width: 1px; height: 18px; background: #5e5e5e; }
    .status .mode { padding: 0 10px; height: 20px; }
    .status .mode.on { background: #4f698c; border: 1px solid #4f90e6; padding: 0 8px; margin-left: -1px; }
    .right { margin-left: auto; display: flex; align-items: center; }
    .tool { width: 29px; height: 20px; }
    .tool + .tool { border-left: 1px solid #5e5e5e; }
    .tool.s { width: 23px; }
    .tool.on { background: #4f698c; border: 1px solid #4f90e6; margin-left: -1px; width: 30px; box-sizing: border-box; }
    .scale { width: 93px; }
    .modelgap { width: 90px; }
  `;

  private toggle(m: string) {
    const next = new Set(this.modes);
    next.has(m) ? next.delete(m) : next.add(m);
    this.modes = next;
  }

  private mode(m: string) {
    return html`<button class="mode ${classMap({ on: this.modes.has(m) })}" aria-pressed=${this.modes.has(m)} @click=${() => this.toggle(m)}>${m}</button>`;
  }

  private tool(name: string, label: string, cls = "") {
    return html`<button class="tool ${cls}" aria-label=${label}>${icon(name)}</button>`;
  }

  private caret(label: string) {
    return html`<button class="narrow" aria-label=${label}><svg width="7" height="5"><path d="M0 0h7L3.500 4z" fill="#ddd"/></svg></button>`;
  }

  render() {
    return html`
      <div class="edge"></div>
      <header class="titlebar">
        <svg class="logo" width="26" height="30" viewBox="0 0 26 30" role="img" aria-label="nanoCAD">
          <defs><linearGradient id="lg" x2="0" y2="1"><stop stop-color="#3de0f5"/><stop offset="1" stop-color="#4a8fe0"/></linearGradient></defs>
          <path d="M8 0h10v9q-8 0-8 8v5q0 7-6 7-4 0-4-5V8q0-8 8-8z" fill="url(#lg)"/>
          <path d="M19 0h7v21q0 8-8 8H8q4-2 4-7v-2q7 0 7-8z" fill="url(#lg)"/>
          <path d="M12 19q-2-8 6-9 1 8-6 9z" fill="#3d4448"/>
        </svg>
        <div class="quick">
          <button aria-label="Создать">${icon("fileNew")}</button><button aria-label="Открыть">${icon("fileOpen")}</button>
          <button aria-label="Сохранить">${icon("save")}</button><button aria-label="Сохранить как">${icon("saveAs")}</button>
          <button aria-label="Отменить">${icon("undo")}</button>${this.caret("Список отмены")}
          <button aria-label="Повторить">${icon("redo")}</button>${this.caret("Список повтора")}
          <button aria-label="Печать">${icon("print")}</button>
          <button class="more" aria-label="Настроить панель"><svg width="7" height="8"><path d="M0 1h7M0 3.500h7" stroke="#ddd"/><path d="M0 5h7L3.500 8z" fill="#ddd"/></svg></button>
        </div>
        <h1>Платформа nanoCAD x64 24 - не для коммерческого использования нефтепровод магистральный_530мм.dwg*</h1>
        <div class="help">
          <button aria-label="Интерфейс"><svg width="21" height="20"><rect x=".5" y=".5" width="20" height="19" fill="#4f698c" stroke="#4f90e6"/><path d="M3 3h4v2h11v4H3z" fill="#f0a860"/><path d="M3.500 9.500h14v8h-14zM9.500 10v7" fill="#3a3a3a" stroke="#ccc"/></svg></button>
          <button aria-label="Справка">?</button>
          <button aria-label="Меню справки"><svg width="7" height="5"><path d="M0 0h7L3.500 4z" fill="#fff"/></svg></button>
        </div>
        <div class="wbtn">
          <button aria-label="Свернуть"><svg width="10" height="10"><path d="M0 5.500h10" stroke="#888"/></svg></button>
          <button aria-label="Восстановить"><svg width="11" height="11"><path d="M.5 2.500h7v8h-7zM3 .5h7.500V9" fill="none" stroke="#888"/></svg></button>
          <button aria-label="Закрыть"><svg width="11" height="11"><path d="M0 0l11 11M11 0L0 11" stroke="#888"/></svg></button>
        </div>
      </header>

      <nav class="menu">${MENU.map((m) => html`<button class=${classMap({ on: m === this.menu })} @click=${() => (this.menu = m)}>${m}</button>`)}</nav>

      <div class="ribbon">
        ${GROUPS.map((g) => html`<section class="group ${g.cls}">
          <div class="cols">${g.cols.map((c) => html`<div class="col ${c.length === 1 ? "one" : ""}">${c.map(([i, t]) => html`<button>${icon(i)}${t}</button>`)}</div>`)}</div>
          <h2>${g.name}</h2></section>`)}
      </div>

      <div class="main">
        <aside>
          <div class="dockhead"><span>GeoSeries: Область инструментов</span><button aria-label="Закрепить">${pin}</button><button aria-label="Закрыть">${cross}</button></div>
          <div class="dock">
            <div class="dockbody">
              <ul class="tree">${TREE.map((n) => html`<li>${[...n.g].map(guide)}<span class="ticon">${icon(n.icon)}</span><button class=${classMap({ sel: !!n.open })}>${n.text}</button></li>`)}</ul>
              <div class="props"></div>
            </div>
            <div class="sidetabs"><button class="on">Трассы и Профили</button><button>Геология</button><button>Трубопроводы</button></div>
          </div>
        </aside>

        <section class="docs">
          <div class="doctabs">
            <div class="tab"><span>нефтепровод магистральный_530мм.dwg*</span><button aria-label="Закрыть"><svg width="8" height="8"><path d="M0 0l8 8M8 0L0 8" stroke="#fff"/></svg></button></div>
            <button aria-label="Список документов"><svg width="9" height="5"><path d="M0 0h9L4.500 5z" fill="#e6e6e6"/></svg></button>
          </div>
          <div class="view">
            <cad-drawing></cad-drawing>
            <div class="vbtns"><button>+</button><button>Сверху</button><button>2D-каркас</button><button>--- нет связанных видов ---</button></div>
            <div class="compass">
              <svg width="162" height="162" viewBox="0 0 162 162" aria-hidden="true"><g fill="none" stroke="#808080"><circle cx="81" cy="81" r="80"/><circle cx="81" cy="81" r="53"/><path d="M81.500 1v160M1 81.500h160"/></g><circle cx="81.500" cy="81.500" r="5.500" fill="#8f6b50" stroke="#6b4a34"/></svg>
              <button>Сверху</button>
            </div>
            <form-editor></form-editor>
          </div>
          <div class="layouts">
            <button class="list" aria-label="Список листов"><svg width="16" height="14"><path d="M.5.5h15v13H.5zM0 9.500h15" fill="none" stroke="#ddd"/><path d="M1 4h14v3H1z" fill="#6aa5f2"/></svg></button>
            <button class="t on">Модель</button><button class="t">Layout1</button><button class="t">Layout2</button>
          </div>
        </section>
      </div>

      <div class="command">
        <div class="chead"><button aria-label="Закрыть">${cross}</button><button aria-label="Закрепить">${pin}</button><span>Коман</span></div>
        <div class="cbody">
          <div class="log"><div>Добавить профиль</div><div>*Отмена*</div><div>*Отмена*</div><div>*Отмена*</div></div>
          <div class="prompt"><label for="cmd">Команда:</label><input id="cmd" /></div>
        </div>
      </div>

      <footer class="status">
        <span class="coords">203348.4462,769251.0411,0.0000</span><i class="sep"></i>
        ${["ШАГ", "СЕТКА", "оПРИВЯЗКА", "3D оПРИВЯЗКА", "ОТС-ОБЪЕКТ", "ОТС-ПОЛЯР", "ОРТО", "ДИН-ВВОД", "ИЗО"].map((m) => this.mode(m))}
        <i class="sep"></i>${["ВЕС", "ШТРИХОВКА"].map((m) => this.mode(m))}
        <div class="right">
          <button>МОДЕЛЬ</button>
          ${this.tool("locks", "Блокировка", "s")}${this.tool("sheet", "Лист", "s")}
          <span class="modelgap"></span>
          ${this.tool("bulbSel", "Изоляция", "s")}${this.tool("bulb", "Подсветка", "s")}
          ${this.tool("noSel", "Запрет выбора", "on")}${this.tool("selMenu", "Меню выбора", "on")}${this.tool("dynUcs", "Динамическая ПСК", "on")}
          <button class="scale">m1:1</button>
          ${this.tool("hand", "Панорамирование")}${this.tool("zoom", "Зум")}${this.tool("zoomAll", "Показать всё")}${this.tool("zoomWin", "Зум рамкой")}${this.tool("orbit", "Орбита")}
          ${this.tool("refresh", "Обновить", "s")}${this.tool("winLock", "Закрепление окон", "s")}${this.tool("winAlert", "Уведомления", "s")}${this.tool("full", "Полный экран")}
        </div>
      </footer>
      <div class="desk"></div>
    `;
  }
}
